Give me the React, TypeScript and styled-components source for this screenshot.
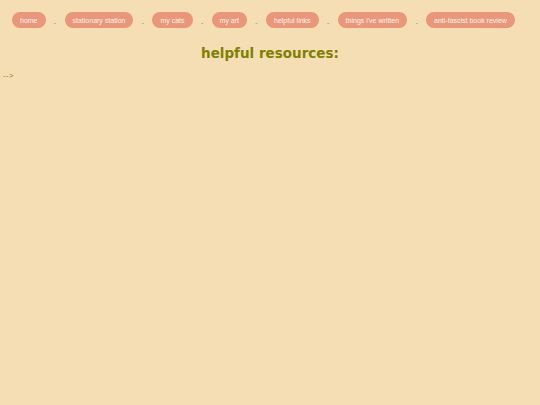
import React from 'react'
import styled, { createGlobalStyle } from 'styled-components'

const GlobalStyle = createGlobalStyle`
    html, body {
        margin: 0;
        padding: 0;
        background-color: #f5deb3;
        min-height: 100%;
    }
    body {
        font-family: "Liberation Sans", Arial, sans-serif;
    }
`

const Page = styled.div`
    min-height: 405px;
    background-color: #f5deb3;
    padding: 12px 0 0 0;
    box-sizing: border-box;
`

const Nav = styled.nav`
    display: flex;
    align-items: center;
    padding: 0 12px;
`

const NavButton = styled.a`
    display: flex;
    align-items: center;
    height: 16px;
    padding: 0 8px;
    border-radius: 8px;
    background-color: #e9967a;
    color: #fff5ee;
    font-size: 7px;
    text-decoration: none;
    white-space: nowrap;
`

const Dash = styled.span`
    display: block;
    width: 19px;
    text-align: center;
    font-size: 7px;
    color: #8a8a8a;
    padding-top: 4px;
`

const Title = styled.h1`
    margin: 17px 0 0 0;
    text-align: center;
    font-family: "DejaVu Sans", Verdana, sans-serif;
    font-weight: bold;
    font-size: 13.5px;
    color: #808000;
`

const Leftover = styled.p`
    margin: 10px 0 0 3px;
    font-size: 7.5px;
    letter-spacing: 0.5px;
    color: #808000;
`

const links = [
    "home",
    "stationary station",
    "my cats",
    "my art",
    "helpful links",
    "things i've written",
    "anti-fascist book review"
]

const App = () => {
    return (
        <Page>
            <GlobalStyle />
            <Nav>
                {links.map((l, i) =>
                    <React.Fragment key={l}>
                        {i > 0 && <Dash>-</Dash>}
                        <NavButton href="#">{l}</NavButton>
                    </React.Fragment>
                )}
            </Nav>
            <Title>helpful resources:</Title>
            <Leftover>--&gt;</Leftover>
        </Page>
    )
}

export default App
